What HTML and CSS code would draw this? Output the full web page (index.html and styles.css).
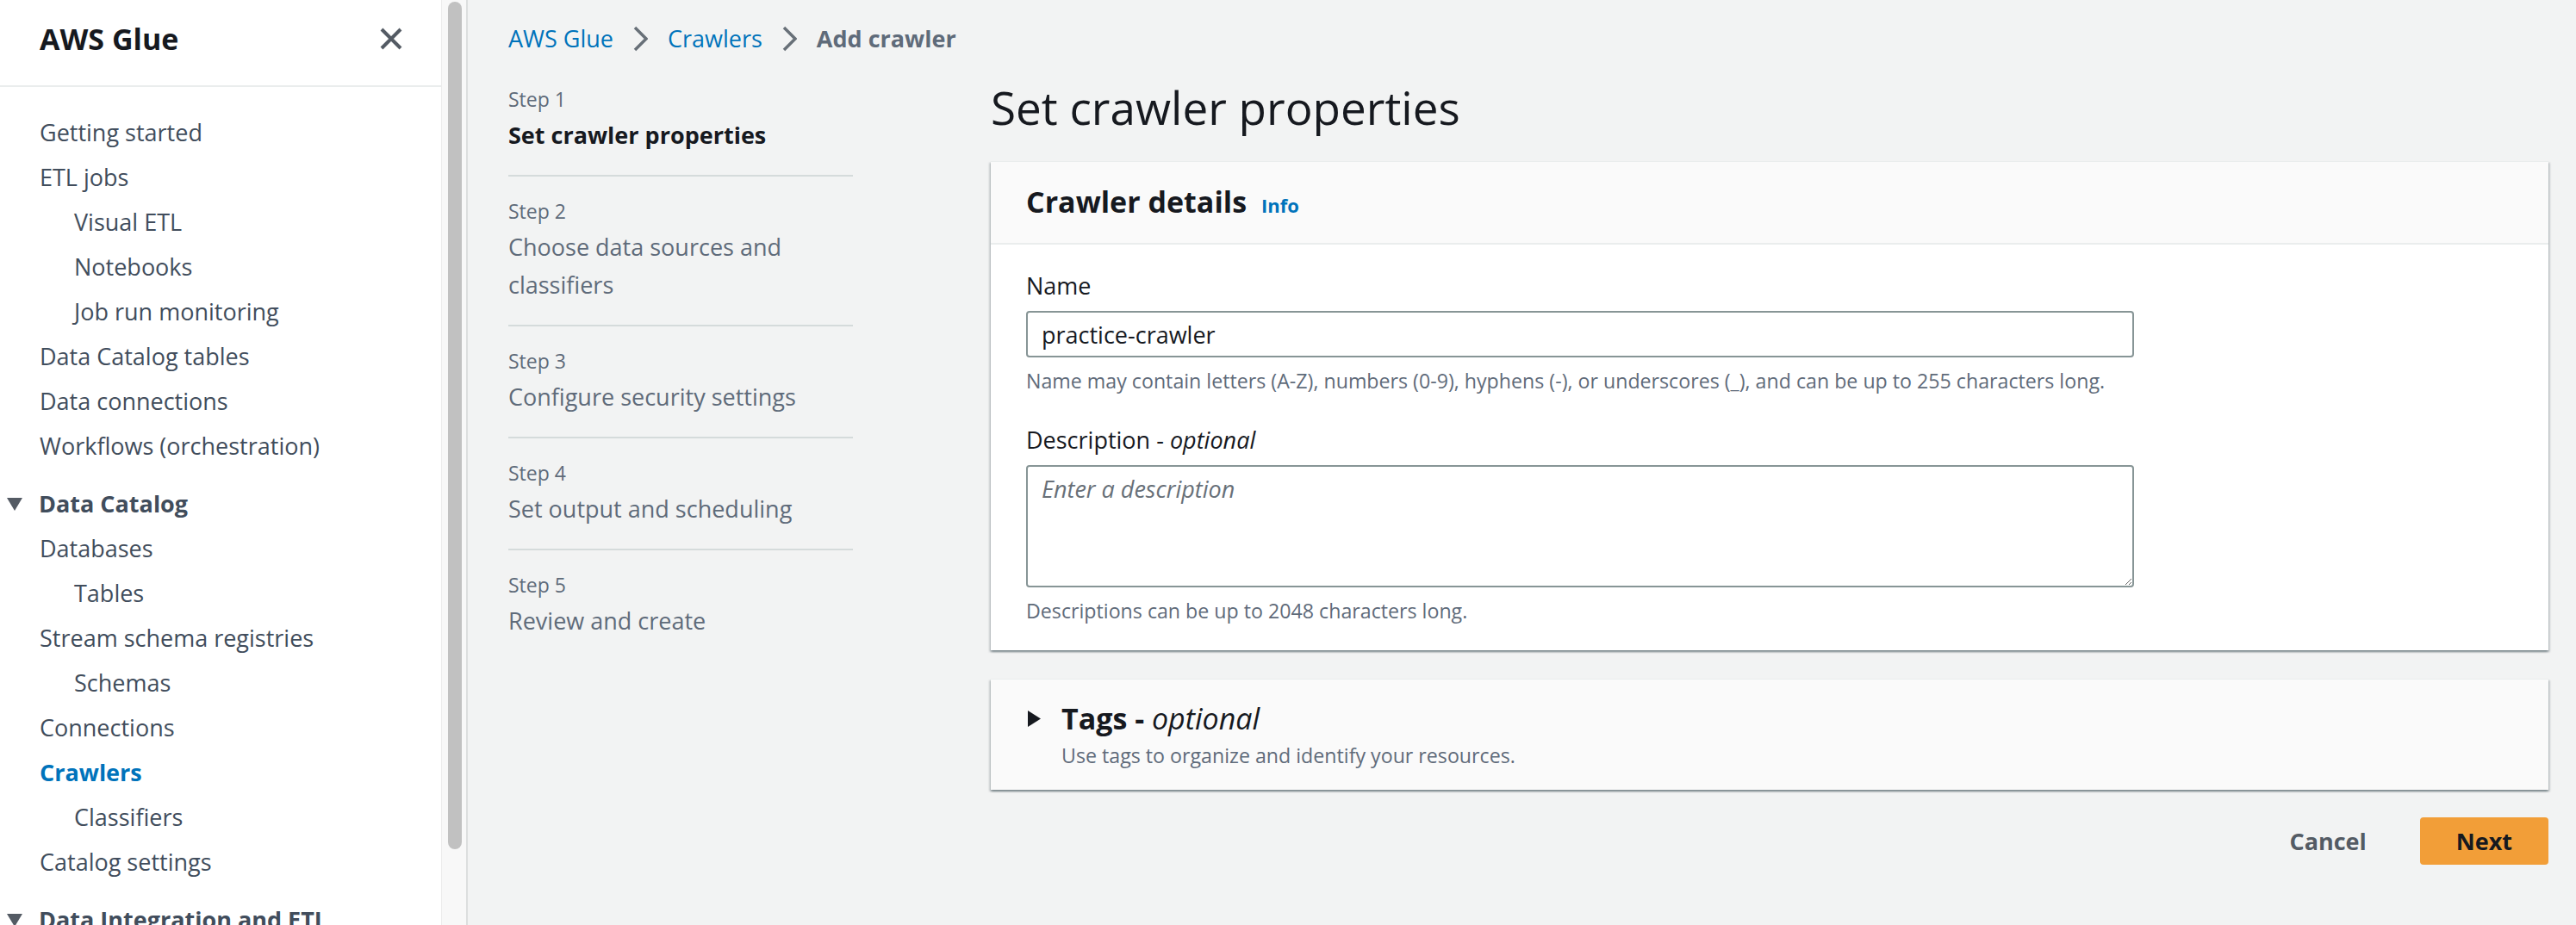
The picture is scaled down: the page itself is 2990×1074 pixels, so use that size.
FILE: index.html
```html
<!DOCTYPE html>
<html lang="en">
<head>
    <meta charset="UTF-8">
    <title>Add crawler | AWS Glue</title>
    <link rel="stylesheet" href="styles.css">
</head>
<body>
    <aside class="sidebar">
        <div class="side_head">
            <span class="side_title">AWS Glue</span>
            <svg class="close" width="26" height="26" viewBox="0 0 26 26"><path d="M2 2 L24 24 M24 2 L2 24" stroke="#545b64" stroke-width="4" fill="none"/></svg>
        </div>
        <ul class="nav">
            <li><a href="#">Getting started</a></li>
            <li><a href="#">ETL jobs</a></li>
            <li class="sub"><a href="#">Visual ETL</a></li>
            <li class="sub"><a href="#">Notebooks</a></li>
            <li class="sub"><a href="#">Job run monitoring</a></li>
            <li><a href="#">Data Catalog tables</a></li>
            <li><a href="#">Data connections</a></li>
            <li><a href="#">Workflows (orchestration)</a></li>
        </ul>
        <div class="section">
            <div class="section_head">
                <svg width="18" height="15" viewBox="0 0 18 15"><polygon points="0,0 18,0 9,15" fill="#545b64"/></svg>
                <span>Data Catalog</span>
            </div>
            <ul class="nav">
                <li><a href="#">Databases</a></li>
                <li class="sub"><a href="#">Tables</a></li>
                <li><a href="#">Stream schema registries</a></li>
                <li class="sub"><a href="#">Schemas</a></li>
                <li><a href="#">Connections</a></li>
                <li class="active"><a href="#">Crawlers</a></li>
                <li class="sub"><a href="#">Classifiers</a></li>
                <li><a href="#">Catalog settings</a></li>
            </ul>
        </div>
        <div class="section">
            <div class="section_head">
                <svg width="18" height="15" viewBox="0 0 18 15"><polygon points="0,0 18,0 9,15" fill="#545b64"/></svg>
                <span>Data Integration and ETL</span>
            </div>
        </div>
    </aside>
    <div class="scroll_track"><div class="scroll_thumb"></div></div>

    <main class="main">
        <nav class="crumbs">
            <a href="#">AWS Glue</a>
            <svg width="17" height="30" viewBox="0 0 17 30"><polyline points="2,2 15,15 2,28" stroke="#687078" stroke-width="3.5" fill="none"/></svg>
            <a href="#">Crawlers</a>
            <svg width="17" height="30" viewBox="0 0 17 30"><polyline points="2,2 15,15 2,28" stroke="#687078" stroke-width="3.5" fill="none"/></svg>
            <span class="current">Add crawler</span>
        </nav>

        <div class="wizard">
            <ol class="steps">
                <li class="step">
                    <div class="step_no">Step 1</div>
                    <div class="step_name current">Set crawler properties</div>
                </li>
                <li class="step">
                    <div class="step_no">Step 2</div>
                    <div class="step_name">Choose data sources and classifiers</div>
                </li>
                <li class="step">
                    <div class="step_no">Step 3</div>
                    <div class="step_name">Configure security settings</div>
                </li>
                <li class="step">
                    <div class="step_no">Step 4</div>
                    <div class="step_name">Set output and scheduling</div>
                </li>
                <li class="step">
                    <div class="step_no">Step 5</div>
                    <div class="step_name">Review and create</div>
                </li>
            </ol>

            <div class="form">
                <h1>Set crawler properties</h1>

                <section class="card">
                    <div class="card_head">
                        <h2>Crawler details</h2><a class="info" href="#">Info</a>
                    </div>
                    <div class="card_body">
                        <div class="field">
                            <label for="name">Name</label>
                            <input id="name" class="input" type="text" value="practice-crawler">
                            <div class="hint">Name may contain letters (A-Z), numbers (0-9), hyphens (-), or underscores (_), and can be up to 255 characters long.</div>
                        </div>
                        <div class="field">
                            <label for="desc">Description - <i>optional</i></label>
                            <textarea id="desc" class="input textarea" placeholder="Enter a description"></textarea>
                            <div class="hint">Descriptions can be up to 2048 characters long.</div>
                        </div>
                    </div>
                </section>

                <section class="card tags">
                    <div class="card_head expander">
                        <svg class="caret" width="15" height="19" viewBox="0 0 15 19"><polygon points="0,0 15,9.5 0,19" fill="#16191f"/></svg>
                        <div>
                            <h2>Tags - <i>optional</i></h2>
                            <div class="sub_title">Use tags to organize and identify your resources.</div>
                        </div>
                    </div>
                </section>

                <div class="actions">
                    <button class="btn btn_link">Cancel</button>
                    <button class="btn btn_primary">Next</button>
                </div>
            </div>
        </div>
    </main>
</body>
</html>
```

FILE: styles.css
```css
*{
    box-sizing: border-box;
}
html, body{
    margin: 0;
    height: 100%;
}
body{
    display: flex;
    overflow: hidden;
    font-family: "Open Sans", "Noto Sans", sans-serif;
    color: #16191f;
    background-color: #f2f3f3;
}
ul, ol{
    list-style: none;
    margin: 0;
    padding: 0;
}
a{
    text-decoration: none;
}
/* 左侧导航 */
.sidebar{
    flex: none;
    width: 512px;
    background-color: #fff;
}
.side_head{
    height: 101px;
    padding: 0 45px 10px 46px;
    display: flex;
    align-items: center;
    justify-content: space-between;
    border-bottom: 2px solid #eaeded;
}
.side_title{
    font-size: 34px;
    font-weight: 700;
    line-height: 40px;
}
.sidebar > .nav{
    padding-top: 27px;
}
.nav a{
    display: block;
    padding-left: 46px;
    font-size: 27px;
    line-height: 52px;
    color: #414d5c;
    white-space: nowrap;
}
.nav .sub a{
    padding-left: 86px;
}
.nav .active a{
    color: #0073bb;
    font-weight: 700;
}
.section{
    margin-top: 15px;
}
.section_head{
    display: flex;
    align-items: center;
    gap: 19px;
    padding-left: 8px;
    font-size: 27px;
    font-weight: 700;
    line-height: 52px;
    color: #414d5c;
    white-space: nowrap;
}
/* 滚动条 */
.scroll_track{
    flex: none;
    width: 31px;
    padding: 2px 5px 0 7px;
    background-color: #f8f8f8;
    border-left: 1px solid #ececec;
    border-right: 2px solid #dcdede;
}
.scroll_thumb{
    height: 984px;
    background-color: #c1c1c1;
    border-radius: 8px;
}
/* 主区域 */
.main{
    flex: 1;
    padding: 25px 32px 0 47px;
}
.crumbs{
    display: flex;
    align-items: center;
    gap: 23px;
    font-size: 27px;
    line-height: 40px;
}
.crumbs a{
    color: #0073bb;
}
.crumbs .current{
    color: #5f6b7a;
    font-weight: 700;
}
.wizard{
    display: grid;
    grid-template-columns: 400px 1fr;
    column-gap: 160px;
    margin-top: 28px;
}
/* 步骤 */
.steps{
    padding-top: 6px;
}
.step{
    padding: 24px 0;
    border-bottom: 2px solid #d5dbdb;
}
.step:first-child{
    padding-top: 0;
}
.step:last-child{
    border-bottom: none;
}
.step_no{
    font-size: 23px;
    line-height: 32px;
    color: #5f6b7a;
}
.step_name{
    margin-top: 4px;
    font-size: 27px;
    line-height: 44px;
    color: #5f6b7a;
}
.step_name.current{
    color: #16191f;
    font-weight: 700;
}
/* 表单 */
h1{
    margin: 0;
    font-size: 53px;
    font-weight: 400;
    line-height: 64px;
}
.card{
    margin-top: 30px;
    background-color: #fff;
    border-top: 1px solid #eaeded;
    box-shadow: 0 2px 2px 0 rgba(0, 28, 36, 0.3), 2px 2px 2px 0 rgba(0, 28, 36, 0.15), -2px 2px 2px 0 rgba(0, 28, 36, 0.15);
}
.card_head{
    padding: 26px 41px 28px;
    background-color: #fafafa;
    border-bottom: 2px solid #eaeded;
}
h2{
    display: inline;
    margin: 0;
    font-size: 34px;
    font-weight: 700;
    line-height: 40px;
}
h2 i{
    font-weight: 400;
}
.info{
    margin-left: 17px;
    font-size: 22px;
    font-weight: 700;
    color: #0073bb;
}
.card_body{
    padding: 28px 41px 30px;
}
.field + .field{
    margin-top: 33px;
}
label{
    display: block;
    font-size: 27px;
    line-height: 40px;
}
.input{
    display: block;
    width: 1286px;
    height: 54px;
    margin-top: 9px;
    padding: 0 16px;
    border: 2px solid #879596;
    border-radius: 4px;
    font-family: inherit;
    font-size: 27px;
    color: #16191f;
    outline: none;
}
.textarea{
    height: 142px;
    padding: 6px 16px;
    line-height: 40px;
}
.textarea::placeholder{
    color: #687078;
    font-style: italic;
}
.hint{
    margin-top: 11px;
    font-size: 23.2px;
    line-height: 32px;
    color: #5f6b7a;
}
.tags{
    margin-top: 33px;
}
.tags .card_head{
    display: flex;
    align-items: flex-start;
    gap: 24px;
    padding: 25px 41px 24px 43px;
    border-bottom: none;
}
.caret{
    flex: none;
    margin-top: 11px;
}
.tags h2{
    display: block;
}
.sub_title{
    margin-top: 7px;
    font-size: 23.2px;
    line-height: 32px;
    color: #5f6b7a;
}
/* 底部按钮 */
.actions{
    display: flex;
    justify-content: flex-end;
    gap: 20px;
    margin-top: 32px;
}
.btn{
    height: 55px;
    padding: 0 42px;
    border: none;
    border-radius: 4px;
    font-family: inherit;
    font-size: 27px;
    font-weight: 700;
    line-height: 55px;
    cursor: pointer;
}
.btn_link{
    background: none;
    color: #545b64;
}
.btn_primary{
    background-color: #f29e38;
    color: #16191f;
}
```
